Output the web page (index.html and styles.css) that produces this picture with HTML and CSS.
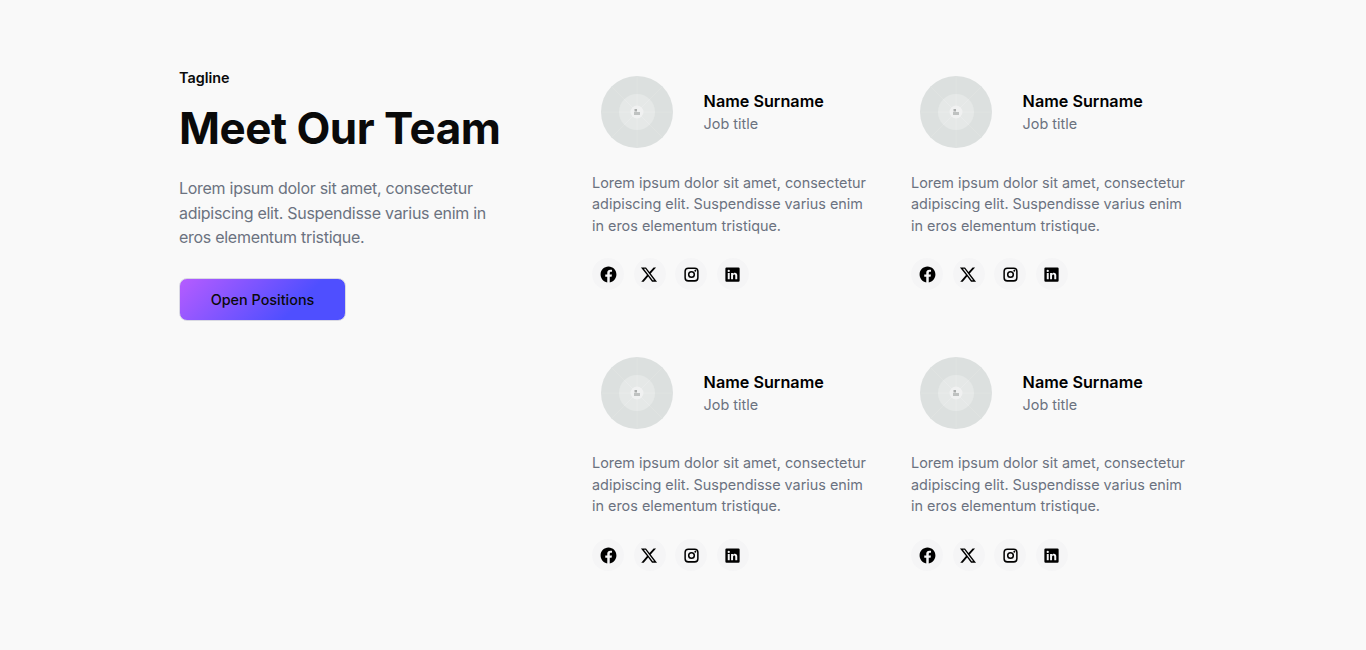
FILE: index.html
```html
<!DOCTYPE html>
<html lang="en">

<head>
    <meta charset="UTF-8">
    <meta name="viewport" content="width=device-width, initial-scale=1.0">
    <title>Meet Our Team</title>
    <link rel="stylesheet" href="styles.css">
</head>

<body>

    <svg class="sprite" width="0" height="0">
        <symbol id="avatar" viewBox="0 0 72 72">
            <circle cx="36" cy="36" r="36" fill="#dce0df" />
            <path d="M10.500 10.500L61.500 61.500M61.500 10.500L10.500 61.500M36 0V72M0 36H72" stroke="#e1e4e3" stroke-width="0.7" />
            <circle cx="36" cy="36" r="18" fill="#e5e8e7" />
            <path d="M23.300 23.300L48.700 48.700M48.700 23.300L23.300 48.700M36 18V54M18 36H54" stroke="#ebedec" stroke-width="0.7" />
            <circle cx="36" cy="36" r="6.500" fill="#f0f1f1" />
            <rect x="33.500" y="33" width="2.500" height="2.500" fill="#a9acab" />
            <rect x="33" y="36" width="6" height="3" fill="#bfc2c1" />
        </symbol>
        <symbol id="facebook" viewBox="0 0 24 24">
            <path d="M22 12.060C22 6.500 17.520 2 12 2S2 6.500 2 12.060c0 5.020 3.660 9.180 8.440 9.940v-7.030H7.900v-2.910h2.540V9.850c0-2.520 1.490-3.910 3.780-3.910 1.090 0 2.240.2 2.240.2v2.470h-1.260c-1.240 0-1.630.78-1.630 1.570v1.880h2.780l-.45 2.910h-2.330V22C18.340 21.240 22 17.080 22 12.060z" />
        </symbol>
        <symbol id="x" viewBox="0 0 24 24">
            <path d="M17.200 3h3.100l-6.800 7.700L21.500 21h-6.300l-4.900-6.400L4.700 21H1.600l7.200-8.300L1.200 3h6.400l4.400 5.900L17.200 3zm-1.100 16.200h1.700L6.800 4.700H4.900l11.200 14.500z" />
        </symbol>
        <symbol id="instagram" viewBox="0 0 24 24">
            <path fill-rule="evenodd" d="M8 3h8a5 5 0 0 1 5 5v8a5 5 0 0 1-5 5H8a5 5 0 0 1-5-5V8a5 5 0 0 1 5-5zm0 1.900A3.100 3.100 0 0 0 4.900 8v8A3.100 3.100 0 0 0 8 19.100h8a3.100 3.100 0 0 0 3.100-3.100V8A3.100 3.100 0 0 0 16 4.900H8zm4 2.600a4.500 4.500 0 1 1 0 9 4.500 4.500 0 0 1 0-9zm0 1.900a2.600 2.600 0 1 0 0 5.200 2.600 2.600 0 0 0 0-5.200zM16.800 6a1.200 1.200 0 1 1 0 2.400 1.200 1.200 0 0 1 0-2.400z" />
        </symbol>
        <symbol id="linkedin" viewBox="0 0 24 24">
            <path fill-rule="evenodd" d="M4.500 3h15A1.500 1.500 0 0 1 21 4.500v15a1.500 1.500 0 0 1-1.500 1.500h-15A1.500 1.500 0 0 1 3 19.500v-15A1.500 1.500 0 0 1 4.500 3zM6 10v8h2.500v-8H6zm1.250-4a1.450 1.450 0 1 0 0 2.900 1.450 1.450 0 0 0 0-2.900zM10.200 10v8h2.500v-4.200c0-1.200.5-1.900 1.500-1.900s1.300.7 1.300 1.900V18H18v-4.900c0-2.200-1.200-3.300-2.900-3.300-1.200 0-2 .6-2.400 1.300V10h-2.500z" />
        </symbol>
    </svg>

    <div class="wrapper">
        <div class="intro">
            <p class="tagline">Tagline</p>
            <h1>Meet Our Team</h1>
            <p class="lead">Lorem ipsum dolor sit amet, consectetur adipiscing elit. Suspendisse varius enim in eros elementum tristique.</p>
            <a class="btn" href="#">Open Positions</a>
        </div>

        <div class="team">
            <div class="member">
                <div class="person">
                    <svg class="avatar"><use href="#avatar" /></svg>
                    <div>
                        <h3>Name Surname</h3>
                        <p class="job">Job title</p>
                    </div>
                </div>
                <p class="bio">Lorem ipsum dolor sit amet, consectetur adipiscing elit. Suspendisse varius enim in eros elementum tristique.</p>
                <div class="social">
                    <a href="#"><svg><use href="#facebook" /></svg></a>
                    <a href="#"><svg><use href="#x" /></svg></a>
                    <a href="#"><svg><use href="#instagram" /></svg></a>
                    <a href="#"><svg><use href="#linkedin" /></svg></a>
                </div>
            </div>
            <div class="member">
                <div class="person">
                    <svg class="avatar"><use href="#avatar" /></svg>
                    <div>
                        <h3>Name Surname</h3>
                        <p class="job">Job title</p>
                    </div>
                </div>
                <p class="bio">Lorem ipsum dolor sit amet, consectetur adipiscing elit. Suspendisse varius enim in eros elementum tristique.</p>
                <div class="social">
                    <a href="#"><svg><use href="#facebook" /></svg></a>
                    <a href="#"><svg><use href="#x" /></svg></a>
                    <a href="#"><svg><use href="#instagram" /></svg></a>
                    <a href="#"><svg><use href="#linkedin" /></svg></a>
                </div>
            </div>
            <div class="member">
                <div class="person">
                    <svg class="avatar"><use href="#avatar" /></svg>
                    <div>
                        <h3>Name Surname</h3>
                        <p class="job">Job title</p>
                    </div>
                </div>
                <p class="bio">Lorem ipsum dolor sit amet, consectetur adipiscing elit. Suspendisse varius enim in eros elementum tristique.</p>
                <div class="social">
                    <a href="#"><svg><use href="#facebook" /></svg></a>
                    <a href="#"><svg><use href="#x" /></svg></a>
                    <a href="#"><svg><use href="#instagram" /></svg></a>
                    <a href="#"><svg><use href="#linkedin" /></svg></a>
                </div>
            </div>
            <div class="member">
                <div class="person">
                    <svg class="avatar"><use href="#avatar" /></svg>
                    <div>
                        <h3>Name Surname</h3>
                        <p class="job">Job title</p>
                    </div>
                </div>
                <p class="bio">Lorem ipsum dolor sit amet, consectetur adipiscing elit. Suspendisse varius enim in eros elementum tristique.</p>
                <div class="social">
                    <a href="#"><svg><use href="#facebook" /></svg></a>
                    <a href="#"><svg><use href="#x" /></svg></a>
                    <a href="#"><svg><use href="#instagram" /></svg></a>
                    <a href="#"><svg><use href="#linkedin" /></svg></a>
                </div>
            </div>
        </div>
    </div>

</body>

</html>
```

FILE: styles.css
```css
* {
    box-sizing: border-box;
}

html,
body {
    margin: 0;
    padding: 0;
}

body {
    height: 650px;
    overflow: hidden;
    background: #f9f9f9;
    color: #000;
    font-family: Inter, "Liberation Sans", sans-serif;
}

p,
h1,
h3 {
    margin: 0;
}

.sprite {
    display: block;
    height: 0;
}

.wrapper {
    display: flex;
    padding: 68px 0 0 179px;
}

.intro {
    flex: none;
    width: 333px;
    margin-right: 80px;
}

.tagline {
    font-size: 14.4px;
    font-weight: 600;
    line-height: 20px;
    color: #0a0a0a;
}

h1 {
    margin-top: 12px;
    font-size: 44px;
    font-weight: 700;
    letter-spacing: -0.5px;
    line-height: 56px;
    white-space: nowrap;
    color: #0a0a0a;
}

.lead {
    margin-top: 20px;
    font-size: 16px;
    letter-spacing: -0.28px;
    line-height: 24.5px;
    color: #6b7280;
}

.btn {
    display: flex;
    align-items: center;
    justify-content: center;
    width: 167px;
    height: 43px;
    margin-top: 28px;
    border: 1px solid #d9d9e3;
    border-radius: 8px;
    background: linear-gradient(135deg, #b65cff 0%, #4f4fff 70%);
    color: #0a0a0a;
    font-size: 14.4px;
    font-weight: 500;
    text-decoration: none;
}

.team {
    flex: none;
    display: grid;
    grid-template-columns: 280px 280px;
    column-gap: 39px;
    row-gap: 66.4px;
    margin-top: 8px;
}

.person {
    display: flex;
    align-items: center;
    gap: 30.6px;
    padding-left: 9px;
}

.avatar {
    display: block;
    width: 72px;
    height: 72px;
}

h3 {
    font-size: 16.2px;
    font-weight: 600;
    line-height: 24px;
}

.job {
    font-size: 14.4px;
    line-height: 22px;
    color: #6b7280;
}

.bio {
    margin-top: 23.5px;
    font-size: 14.4px;
    line-height: 21.6px;
    color: #6b7280;
}

.social {
    display: flex;
    gap: 9.5px;
    margin-top: 22.1px;
}

.social a {
    display: flex;
    align-items: center;
    justify-content: center;
    width: 32px;
    height: 32px;
    border-radius: 50%;
    background: #f5f5f6;
}

.social svg {
    width: 19px;
    height: 19px;
    fill: #000;
}
```
